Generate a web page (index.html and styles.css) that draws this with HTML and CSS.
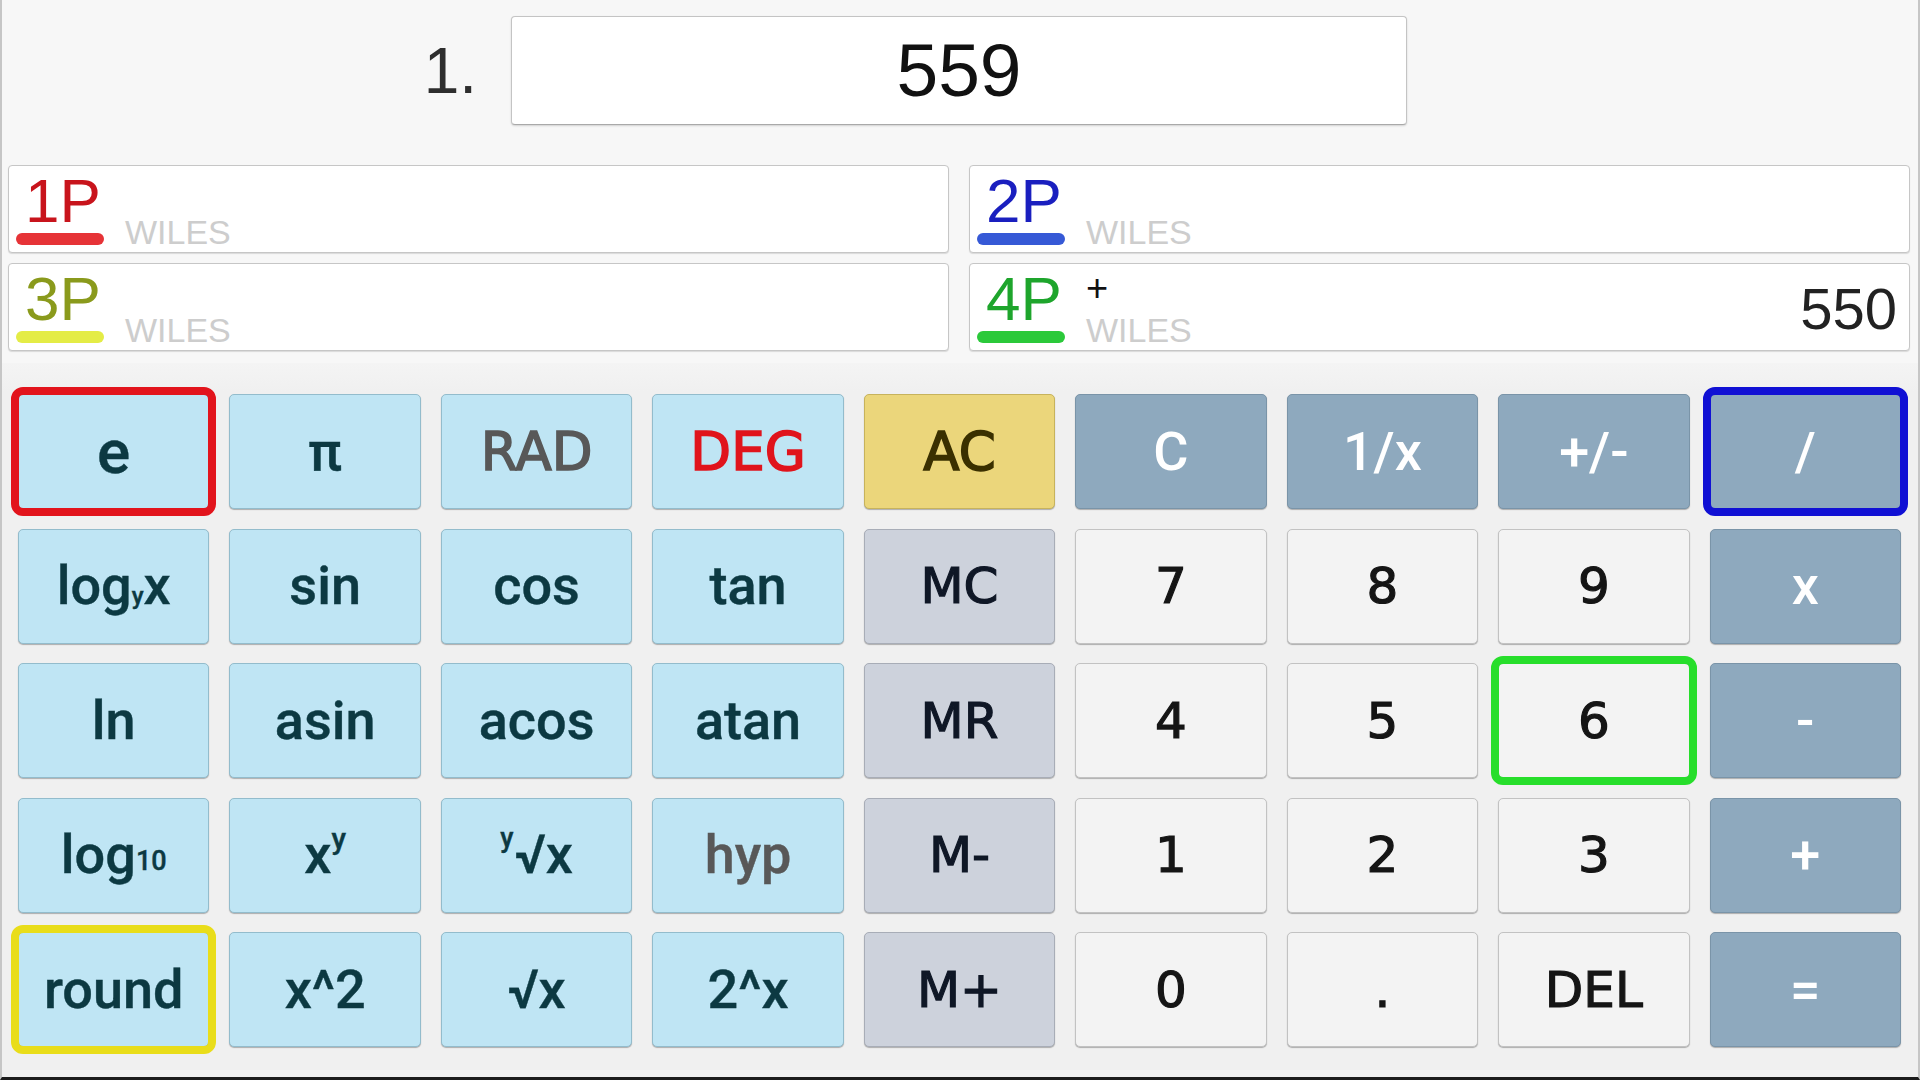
FILE: index.html
```html
<!DOCTYPE html>
<html lang="en">
<head>
<meta charset="utf-8">
<title>Calculator</title>
<link rel="stylesheet" href="styles.css">
</head>
<body>
<div class="app">
  <header class="top">
    <div class="display-row">
      <div class="step">1.</div>
      <div class="display"><span class="display-value">559</span></div>
    </div>
    <div class="players">
      <div class="player p1">
        <div class="tag"><span class="tag-label">1P</span><span class="tag-bar"></span></div>
        <div class="meta"><span class="name">WILES</span></div>
        <div class="value"></div>
      </div>
      <div class="player p2">
        <div class="tag"><span class="tag-label">2P</span><span class="tag-bar"></span></div>
        <div class="meta"><span class="name">WILES</span></div>
        <div class="value"></div>
      </div>
      <div class="player p3">
        <div class="tag"><span class="tag-label">3P</span><span class="tag-bar"></span></div>
        <div class="meta"><span class="name">WILES</span></div>
        <div class="value"></div>
      </div>
      <div class="player p4">
        <div class="tag"><span class="tag-label">4P</span><span class="tag-bar"></span></div>
        <div class="meta"><span class="op">+</span><span class="name">WILES</span></div>
        <div class="value">550</div>
      </div>
    </div>
  </header>
  <main class="keypad">
    <button class="key sci big-e hl-red">e</button>
    <button class="key sci">π</button>
    <button class="key sci caps rad">RAD</button>
    <button class="key sci caps deg">DEG</button>
    <button class="key ac caps">AC</button>
    <button class="key op-key">C</button>
    <button class="key op-key">1/x</button>
    <button class="key op-key">+/-</button>
    <button class="key op-key hl-blue">/</button>

    <button class="key sci">log<span class="sub-y">y</span>x</button>
    <button class="key sci">sin</button>
    <button class="key sci">cos</button>
    <button class="key sci">tan</button>
    <button class="key mem">MC</button>
    <button class="key digit">7</button>
    <button class="key digit">8</button>
    <button class="key digit">9</button>
    <button class="key op-key">x</button>

    <button class="key sci">ln</button>
    <button class="key sci">asin</button>
    <button class="key sci">acos</button>
    <button class="key sci">atan</button>
    <button class="key mem">MR</button>
    <button class="key digit">4</button>
    <button class="key digit">5</button>
    <button class="key digit hl-green">6</button>
    <button class="key op-key">-</button>

    <button class="key sci">log<span class="sub-10">10</span></button>
    <button class="key sci">x<span class="sup-y">y</span></button>
    <button class="key sci"><span class="pre-y">y</span>√x</button>
    <button class="key sci hyp">hyp</button>
    <button class="key mem">M-</button>
    <button class="key digit">1</button>
    <button class="key digit">2</button>
    <button class="key digit">3</button>
    <button class="key op-key">+</button>

    <button class="key sci hl-yellow">round</button>
    <button class="key sci">x^2</button>
    <button class="key sci">√x</button>
    <button class="key sci">2^x</button>
    <button class="key mem">M+</button>
    <button class="key digit">0</button>
    <button class="key digit">.</button>
    <button class="key digit">DEL</button>
    <button class="key op-key">=</button>
  </main>
</div>
</body>
</html>
```

FILE: styles.css
```css
html, body {
  margin: 0;
  padding: 0;
}

body {
  width: 1920px;
  height: 1080px;
  overflow: hidden;
  background: #f0f0f0;
  font-family: "Liberation Sans", Arial, sans-serif;
}

.app {
  box-sizing: border-box;
  width: 1920px;
  height: 1080px;
  display: flex;
  flex-direction: column;
  border-left: 2px solid #c6c6c6;
  border-right: 2px solid #c6c6c6;
  border-bottom: 3px solid #1c1c1c;
  background: #f0f0f0;
}

/* ---------- top area ---------- */
.top {
  box-sizing: border-box;
  height: 363px;
  flex: none;
  padding: 16px 8px 0 6px;
  background: #f7f7f7;
}

.display-row {
  display: grid;
  grid-template-columns: 1fr 896px 1fr;
  column-gap: 34px;
  align-items: center;
}

.step {
  justify-self: end;
  font-size: 64px;
  line-height: 1;
  color: #2e2e2e;
}

.display {
  box-sizing: border-box;
  height: 109px;
  display: flex;
  align-items: center;
  justify-content: center;
  background: #fff;
  border: 1px solid #c4c4c4;
  border-bottom-color: #a9a9a9;
  border-radius: 4px;
  box-shadow: 0 1px 2px rgba(0, 0, 0, 0.15);
}

.display-value {
  font-size: 75px;
  line-height: 1;
  color: #111;
}

.players {
  margin-top: 40px;
  display: grid;
  grid-template-columns: 1fr 1fr;
  column-gap: 20px;
  row-gap: 10px;
}

.player {
  box-sizing: border-box;
  height: 88px;
  display: flex;
  padding: 4px 12px 0 7px;
  background: #fff;
  border: 1px solid #c6c6c6;
  border-radius: 4px;
  box-shadow: 0 1px 1px rgba(0, 0, 0, 0.12);
}

.tag {
  flex: none;
  width: 109px;
  display: flex;
  flex-direction: column;
}

.tag-label {
  height: 62px;
  margin-left: 9px;
  font-size: 62px;
  line-height: 1;
}

.tag-bar {
  width: 88px;
  height: 12px;
  margin-top: 1px;
  border-radius: 6px;
}

.p1 .tag-label { color: #c8141c; }
.p1 .tag-bar { background: #e63337; }
.p2 .tag-label { color: #1a1fbf; }
.p2 .tag-bar { background: #3659d6; }
.p3 .tag-label { color: #8a9a1c; }
.p3 .tag-bar { background: #e4ec46; }
.p4 .tag-label { color: #1ea52c; }
.p4 .tag-bar { background: #2bc93a; }

.meta {
  display: flex;
  flex-direction: column;
  padding-bottom: 3px;
}

.op {
  margin-top: 1px;
  font-size: 38px;
  line-height: 1;
  color: #111;
}

.name {
  margin-top: auto;
  font-size: 34px;
  line-height: 1;
  color: #cdcdcd;
}

.value {
  margin-left: auto;
  align-self: center;
  font-size: 58px;
  line-height: 1;
  color: #222;
}

/* ---------- keypad ---------- */
.keypad {
  flex: 1;
  box-sizing: border-box;
  display: grid;
  grid-template-columns: repeat(9, 1fr);
  grid-template-rows: repeat(5, 115px);
  column-gap: 20px;
  row-gap: 19.5px;
  align-content: start;
  padding: 31px 17px 0 16px;
  background: linear-gradient(#f4f4f4, #f0f0f0 28px);
}

.key {
  box-sizing: border-box;
  margin: 0;
  padding: 0;
  display: flex;
  align-items: center;
  justify-content: center;
  border: 1px solid #aaa;
  border-radius: 5px;
  box-shadow: 0 1px 1px rgba(0, 0, 0, 0.28);
  font-family: Roboto, "DejaVu Sans", sans-serif;
  font-weight: 500;
  font-size: 54px;
  line-height: 1;
  white-space: nowrap;
  cursor: pointer;
}

.sci {
  background: #bfe5f4;
  border-color: #93bccc;
  color: #0c3942;
  -webkit-text-stroke: 0.4px currentColor;
}

.big-e { font-size: 62px; }

.caps {
  font-family: "DejaVu Sans", sans-serif;
  font-weight: 400;
  font-size: 53px;
  -webkit-text-stroke: 1.6px currentColor;
}

.rad { color: #585858; }
.deg { color: #e0141c; }
.hyp { color: #585858; }

.ac {
  background: #ebd67b;
  border-color: #c7b35c;
  color: #3a3000;
}

.op-key {
  background: #8ea9be;
  border-color: #7a94a8;
  color: #fff;
}

.mem {
  background: #cdd2dc;
  border-color: #a8adb7;
  color: #0f1726;
  font-family: "DejaVu Sans", sans-serif;
  font-weight: 400;
  font-size: 50px;
  -webkit-text-stroke: 1.2px currentColor;
}

.digit {
  background: #f3f3f3;
  border-color: #c2c2c2;
  color: #151515;
  font-family: "DejaVu Sans", sans-serif;
  font-weight: 400;
  font-size: 50px;
  -webkit-text-stroke: 1.2px currentColor;
}

.sub-y {
  font-size: 0.45em;
  position: relative;
  top: 0.4em;
}

.sub-10 {
  font-size: 0.5em;
  position: relative;
  top: 0.25em;
}

.sup-y {
  font-size: 0.55em;
  position: relative;
  top: -0.55em;
}

.pre-y {
  font-size: 0.5em;
  position: relative;
  top: -0.6em;
  margin-right: 1px;
}

.hl-red { outline: 8px solid #e2141c; outline-offset: -1px; }
.hl-blue { outline: 8px solid #1010d4; outline-offset: -1px; }
.hl-green { outline: 8px solid #27de2b; outline-offset: -1px; }
.hl-yellow { outline: 8px solid #e9dd1a; outline-offset: -1px; }
```
